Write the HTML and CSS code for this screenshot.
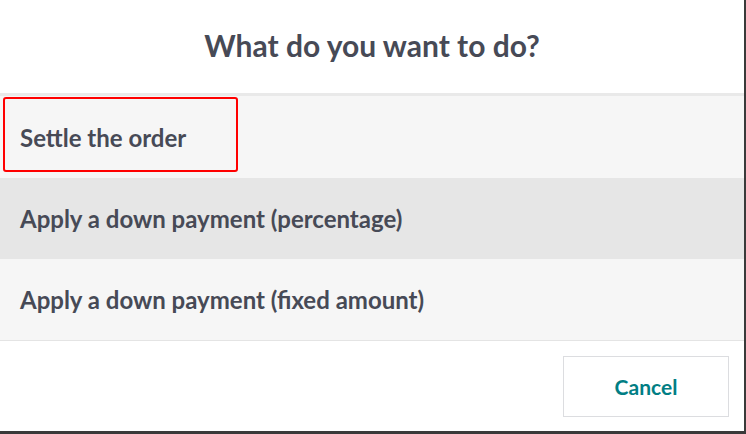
FILE: index.html
```html
<!DOCTYPE html>
<html lang="en">
<head>
  <meta charset="UTF-8">
  <meta name="viewport" content="width=device-width, initial-scale=1.0">
  <title>What do you want to do?</title>
  <link rel="stylesheet" href="styles.css">
</head>
<body>
  <div class="popup">
    <header class="popup-title">What do you want to do?</header>
    <div class="selection">
      <div class="selection-item first">
        Settle the order
        <span class="highlight"></span>
      </div>
      <div class="selection-item hover">Apply a down payment (percentage)</div>
      <div class="selection-item">Apply a down payment (fixed amount)</div>
    </div>
    <footer class="popup-footer">
      <button class="btn-cancel">Cancel</button>
    </footer>
  </div>
</body>
</html>
```

FILE: styles.css
```css
body {
  margin: 0;
  background-color: #3a3a3a;
  font-family: Lato, "Noto Sans", sans-serif;
  color: #474a56;
}
.popup {
  width: 744px;
  height: 431px;
  background: #fff;
  display: flex;
  flex-direction: column;
}
.popup-title {
  height: 96px;
  display: flex;
  align-items: center;
  justify-content: center;
  font-size: 30px;
  font-weight: 700;
  border-bottom: 3px solid #e9e9e9;
  box-sizing: border-box;
  padding-bottom: 4px;
}
.selection-item {
  position: relative;
  height: 81px;
  display: flex;
  align-items: center;
  padding-left: 20px;
  font-size: 24px;
  font-weight: 700;
  background-color: #f6f6f6;
}
.selection-item.first {
  height: 82px;
}
.selection-item.hover {
  background-color: #e6e6e6;
}
.highlight {
  position: absolute;
  left: 3px;
  top: 1px;
  width: 235px;
  height: 75px;
  box-sizing: border-box;
  border: 2px solid #ff0000;
  border-radius: 3px;
}
.popup-footer {
  flex: 1;
  border-top: 1px solid #e4e4e4;
  display: flex;
  justify-content: flex-end;
  align-items: flex-start;
  padding: 15px 15px 0 0;
}
.btn-cancel {
  width: 166px;
  height: 61px;
  background: #fff;
  border: 1px solid #dcdde0;
  font-family: Lato, "Noto Sans", sans-serif;
  font-size: 21px;
  font-weight: 700;
  color: #017e84;
  cursor: pointer;
}
```
